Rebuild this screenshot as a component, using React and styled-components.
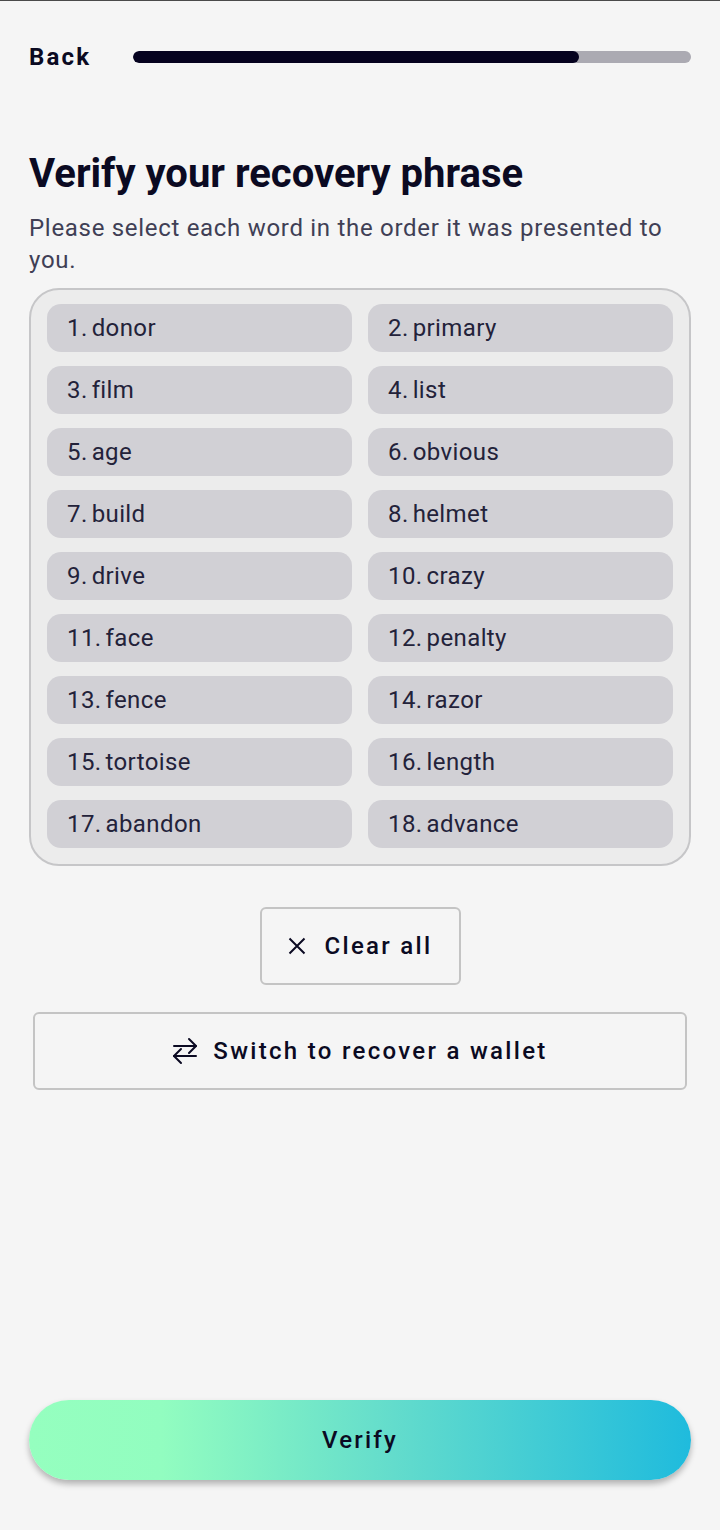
import React from 'react';
import styled, { createGlobalStyle } from 'styled-components';

const GlobalStyle = createGlobalStyle`
  html, body {
    margin: 0;
    padding: 0;
    background: #f5f5f5;
    font-family: Roboto, "Liberation Sans", sans-serif;
  }
  * { box-sizing: border-box; }
`;

const Page = styled.div`
  min-height: 1530px;
  display: flex;
  flex-direction: column;
  padding: 0 29px 50px;
  border-top: 1px solid #4a4a4a;
`;

const TopBar = styled.div`
  display: flex;
  align-items: center;
  gap: 42px;
  height: 30px;
  margin-top: 41px;
`;

const BackLink = styled.span`
  font-size: 24px;
  font-weight: 700;
  letter-spacing: 2.2px;
  color: #0b0a22;
`;

const Track = styled.div`
  flex: 1;
  height: 12px;
  border-radius: 6px;
  background: #abaab2;
  overflow: hidden;
`;

const Fill = styled.div`
  height: 100%;
  border-radius: 6px;
  background: #05021f;
`;

const Title = styled.h1`
  margin: 78px 0 0;
  font-size: 40px;
  line-height: 48px;
  font-weight: 700;
  color: #0b0a22;
`;

const Subtitle = styled.p`
  margin: 14px 0 0;
  font-size: 24px;
  line-height: 32px;
  letter-spacing: 0.7px;
  color: #403f55;
`;

const Card = styled.div`
  margin-top: 12px;
  border: 2px solid #c6c6c8;
  border-radius: 30px;
  background: #ececec;
  padding: 14px 16px 16px;
  display: grid;
  grid-template-columns: 1fr 1fr;
  column-gap: 16px;
  row-gap: 14px;
`;

const Chip = styled.div`
  height: 48px;
  border-radius: 14px;
  background: #d1d0d5;
  display: flex;
  align-items: center;
  padding-left: 20px;
  font-size: 24px;
  letter-spacing: 0.4px;
  color: #23223a;
`;

const Num = styled.span`
  margin-right: 4px;
`;

const OutlineButton = styled.button`
  display: flex;
  align-items: center;
  justify-content: center;
  height: 78px;
  background: transparent;
  border: 2px solid #c4c4c4;
  border-radius: 6px;
  font-family: Roboto, "Liberation Sans", sans-serif;
  font-size: 24px;
  font-weight: 500;
  letter-spacing: 2.3px;
  color: #0b0a22;
  padding: 0;
`;

const ClearButton = styled(OutlineButton)`
  width: 201px;
  align-self: center;
  margin-top: 41px;
  gap: 19px;
`;

const SwitchButton = styled(OutlineButton)`
  margin: 27px 4px 0;
  gap: 15px;
`;

const Spacer = styled.div`
  flex: 1;
`;

const VerifyButton = styled.button`
  height: 80px;
  border: none;
  border-radius: 40px;
  background: linear-gradient(90deg, #95ffbf 0%, #92fdc0 20%, #63dccc 55%, #1fbbdd 100%);
  box-shadow: 0 4px 6px rgba(0, 0, 0, 0.28);
  font-family: Roboto, "Liberation Sans", sans-serif;
  font-size: 24px;
  font-weight: 500;
  letter-spacing: 2.2px;
  color: #0b0a22;
`;

const words = [
  'donor', 'primary', 'film', 'list', 'age', 'obvious', 'build', 'helmet',
  'drive', 'crazy', 'face', 'penalty', 'fence', 'razor', 'tortoise', 'length',
  'abandon', 'advance',
];

const CloseIcon = () => (
  <svg width="18" height="18" viewBox="0 0 18 18" fill="none" stroke="#0b0a22" strokeWidth="2">
    <path d="M1.5 1.5l15 15M16.5 1.5l-15 15" />
  </svg>
);

const SwapIcon = () => (
  <svg width="26" height="28" viewBox="0 0 26 28" fill="none" stroke="#0b0a22" strokeWidth="2" strokeLinecap="round" strokeLinejoin="round">
    <path d="M17 2l7 7-7 7" />
    <path d="M24 9H2" />
    <path d="M9 12l-7 7 7 7" />
    <path d="M2 19h22" />
  </svg>
);

export default function App() {
  const progress = 80;
  return (
    <>
      <GlobalStyle />
      <Page>
        <TopBar>
          <BackLink>Back</BackLink>
          <Track>
            <Fill style={{ width: `${progress}%` }} />
          </Track>
        </TopBar>
        <Title>Verify your recovery phrase</Title>
        <Subtitle>Please select each word in the order it was presented to you.</Subtitle>
        <Card>
          {words.map((w, i) => (
            <Chip key={w}>
              <Num>{i + 1}.</Num>{w}
            </Chip>
          ))}
        </Card>
        <ClearButton>
          <CloseIcon />
          Clear all
        </ClearButton>
        <SwitchButton>
          <SwapIcon />
          Switch to recover a wallet
        </SwitchButton>
        <Spacer />
        <VerifyButton>Verify</VerifyButton>
      </Page>
    </>
  );
}
